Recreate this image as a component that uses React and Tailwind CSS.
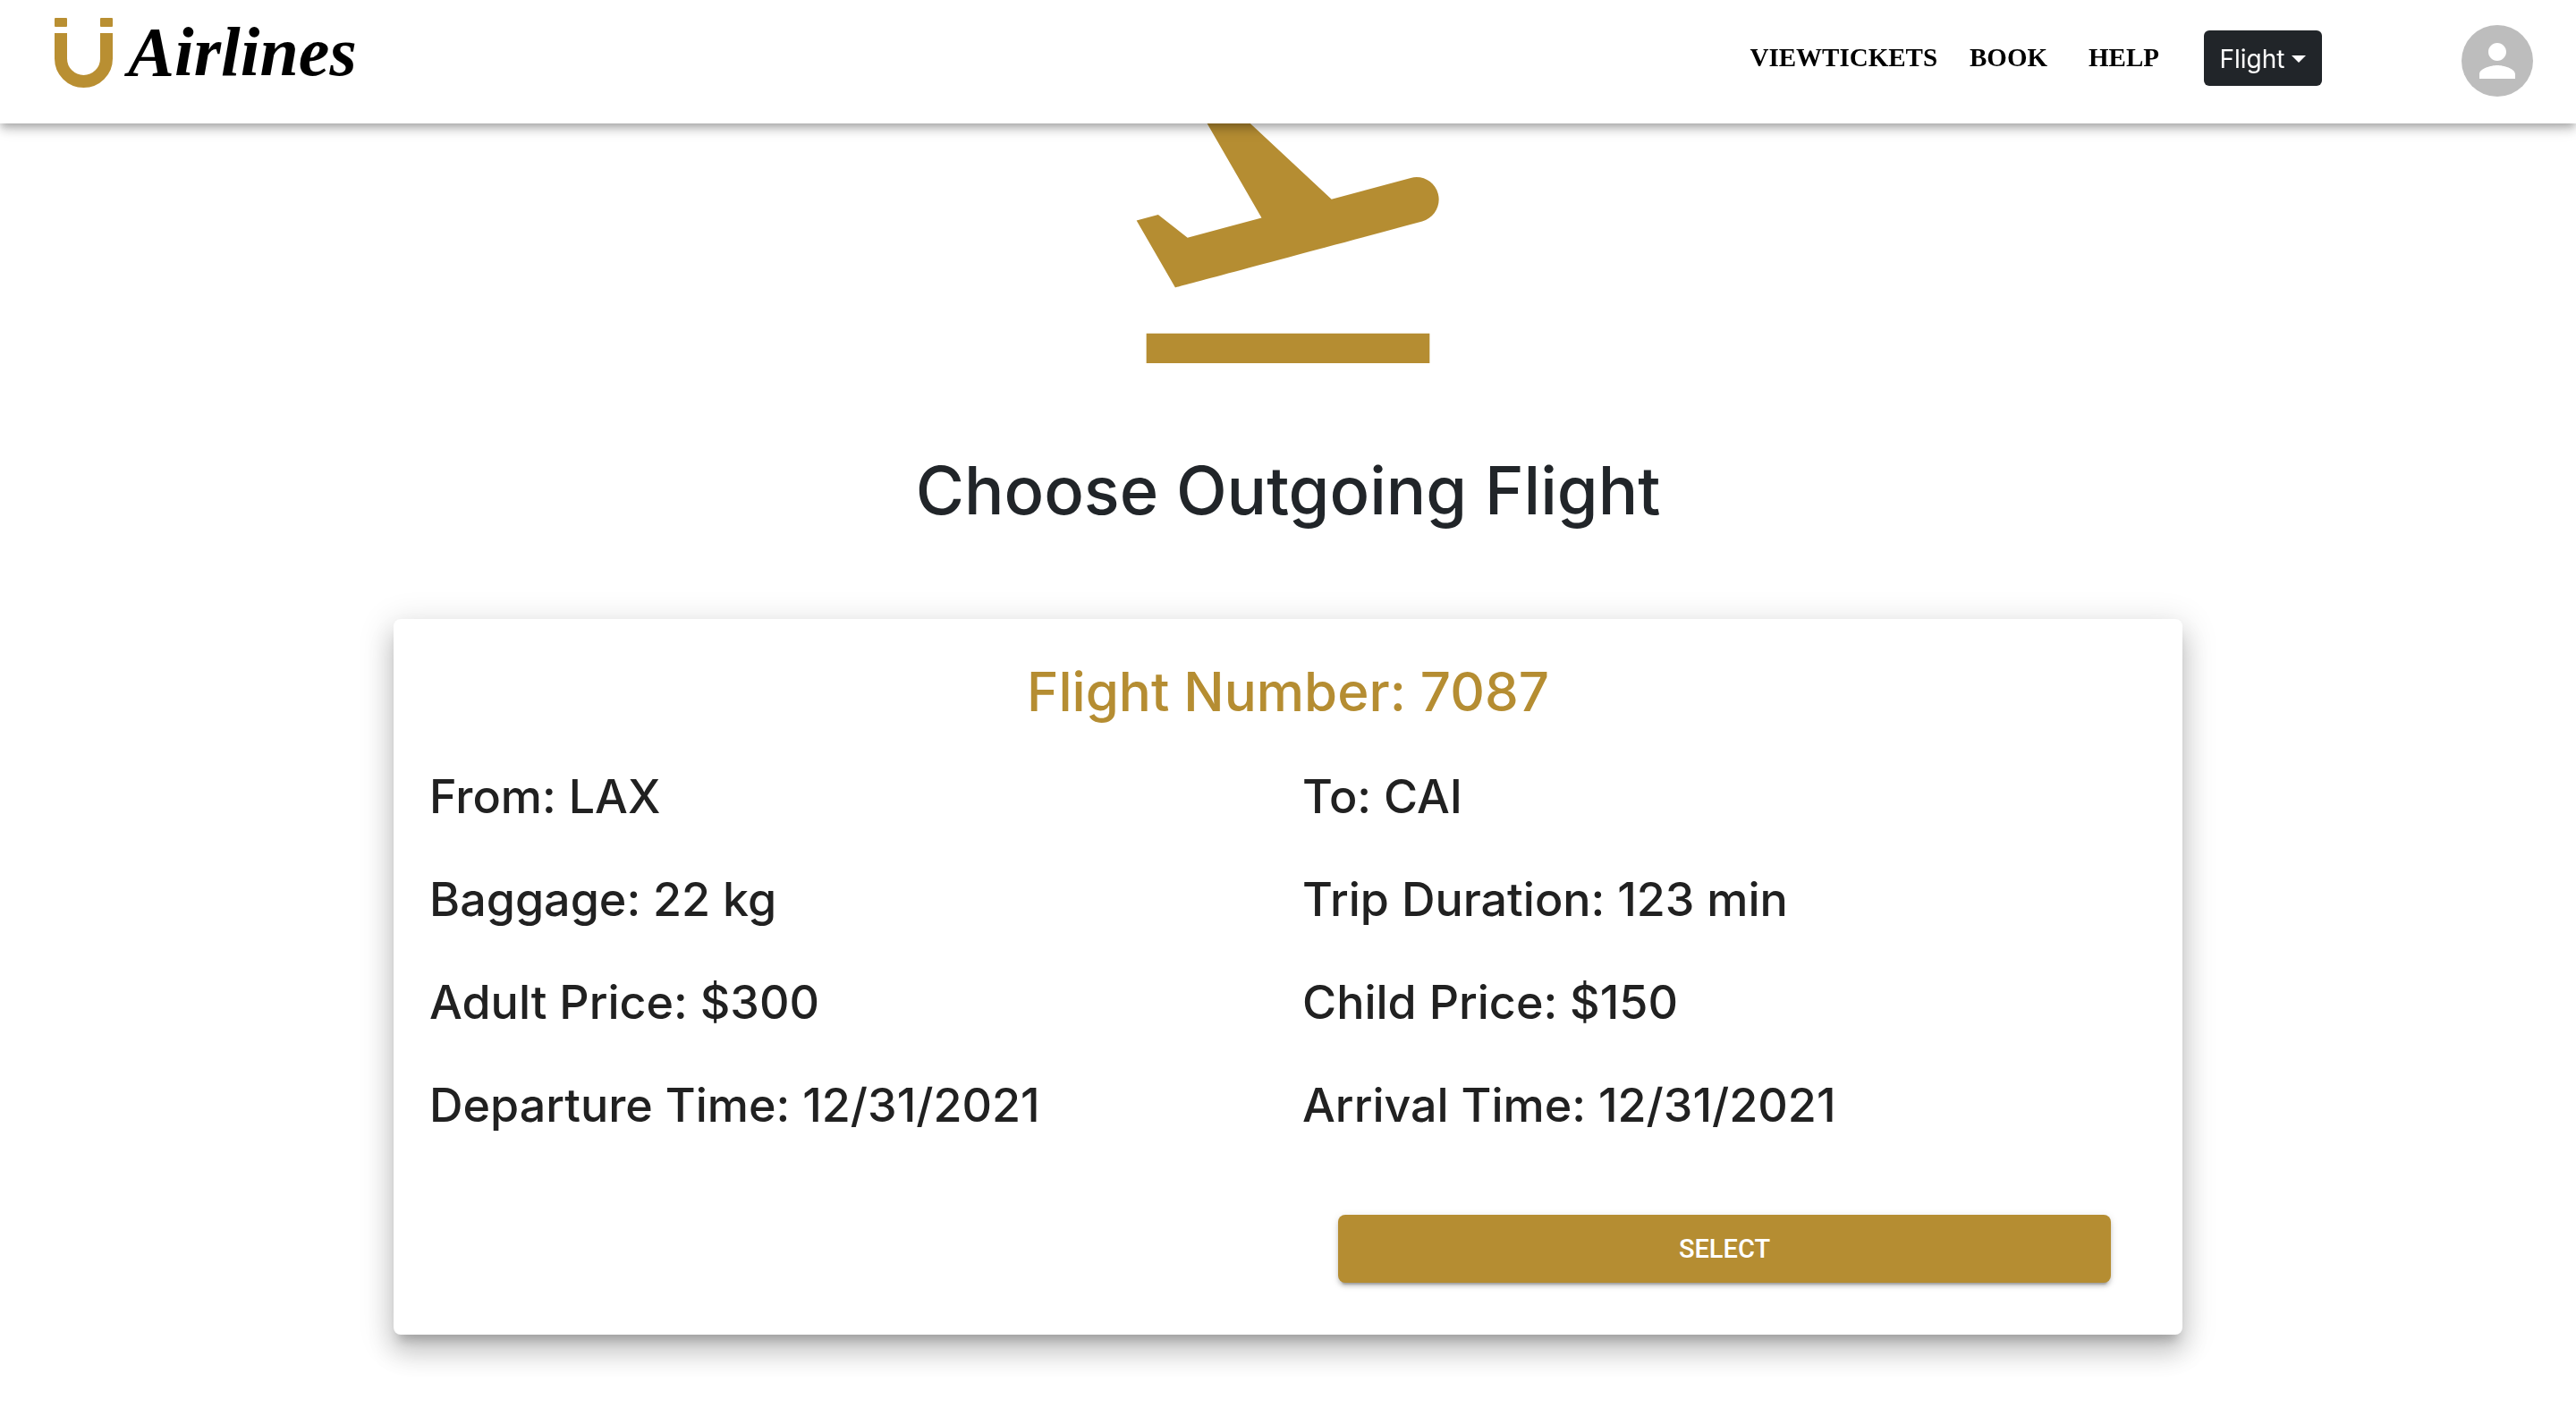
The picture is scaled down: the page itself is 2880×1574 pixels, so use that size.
const flight = {
  number: '7087',
  details: [
    ['From', 'LAX'],
    ['To', 'CAI'],
    ['Baggage', '22 kg'],
    ['Trip Duration', '123 min'],
    ['Adult Price', '$300'],
    ['Child Price', '$150'],
    ['Departure Time', '12/31/2021'],
    ['Arrival Time', '12/31/2021'],
  ],
};

function Logo() {
  return (
    <a href="#home" aria-label="U Airlines" className="flex items-start gap-4 pl-15 pt-5 text-black">
      <svg viewBox="0 0 67 78" className="h-[78px] w-[67px]" aria-hidden="true">
        <g fill="#b98f32">
          <rect x="1" y="0" width="14" height="10" rx="1" />
          <rect x="52" y="0" width="14" height="10" rx="1" />
        </g>
        <path d="M8 17v28.500a25.500 25.500 0 0 0 51 0V17" fill="none" stroke="#b98f32" strokeWidth="14" />
      </svg>
      <span className="font-['Liberation_Serif',serif] text-[78px] leading-[76px] font-bold italic">Airlines</span>
    </a>
  );
}

function Header() {
  return (
    <header className="fixed inset-x-0 top-0 z-10 flex h-[138px] items-start justify-between bg-white pr-12 shadow-[0_4px_8px_-2px_rgba(0,0,0,0.2),0_8px_10px_0_rgba(0,0,0,0.14),0_2px_20px_0_rgba(0,0,0,0.12)]">
      <Logo />
      <div className="flex items-start">
        <nav className="flex pt-11 font-['Liberation_Serif',serif] text-[29px] leading-10 font-bold text-black">
          <a href="#tickets">VIEWTICKETS</a>
          <a href="#book" className="ml-9">BOOK</a>
          <a href="#help" className="ml-[46px]">HELP</a>
        </nav>
        <button
          type="button"
          aria-haspopup="menu"
          className="mt-[34px] ml-[50px] flex h-[62px] w-[132px] items-center justify-center gap-2 rounded-md bg-[#212529] pt-0.5 text-[28px] text-white"
        >
          Flight
          <span className="border-x-8 border-t-8 border-x-transparent border-t-white" />
        </button>
        <button
          type="button"
          aria-label="Account"
          className="mt-7 ml-39 flex size-20 items-center justify-center rounded-full bg-[#bdbdbd]"
        >
          <svg viewBox="0 0 24 24" className="size-[60px] fill-white" aria-hidden="true">
            <path d="M12 12c2.210 0 4-1.790 4-4s-1.790-4-4-4-4 1.790-4 4 1.790 4 4 4zm0 2c-2.670 0-8 1.340-8 4v2h16v-2c0-2.660-5.330-4-8-4z" />
          </svg>
        </button>
      </div>
    </header>
  );
}

function FlightCard() {
  return (
    <section className="mx-auto mt-24 w-full max-w-[2000px] rounded-lg bg-white px-10 pt-10 pb-[58px] text-[#212121] shadow-[0_12px_12px_-6px_rgba(0,0,0,0.2),0_20px_28px_2px_rgba(0,0,0,0.14),0_8px_36px_6px_rgba(0,0,0,0.12)]">
      <h2 className="text-center text-[60px] leading-[82px] font-medium text-[#b58d32]">
        Flight Number: {flight.number}
      </h2>
      <div className="mt-[43px] grid grid-cols-2 gap-x-8 gap-y-[47px] text-[52px] leading-[68px] font-medium">
        {flight.details.map(([label, value]) => (
          <p key={label}>
            {label}: {value}
          </p>
        ))}
      </div>
      <div className="mt-22 grid grid-cols-2 gap-x-8">
        <button
          type="button"
          className="col-start-2 mx-10 h-[76px] rounded-lg bg-[#b58d32] pt-0.5 font-[Roboto,sans-serif] text-[29px] font-medium text-white shadow-[0_6px_2px_-4px_rgba(0,0,0,0.2),0_4px_4px_0_rgba(0,0,0,0.14),0_2px_10px_0_rgba(0,0,0,0.12)]"
        >
          SELECT
        </button>
      </div>
    </section>
  );
}

export default function App() {
  return (
    <div className="min-h-screen bg-white font-[Inter,sans-serif] text-[#212529]">
      <Header />
      <main className="flex flex-col items-center px-10 pt-14 pb-20">
        <svg viewBox="0 0 24 24" className="size-[400px] fill-[#b58d32]" aria-hidden="true">
          <path d="M2.500 19h19v2h-19v-2zm19.570-9.360c-.21-.8-1.040-1.280-1.840-1.060L14.920 10l-6.900-6.430-1.930.51 4.140 7.170-4.970 1.330-1.970-1.540-1.450.39 2.590 4.490s7.120-1.900 16.570-4.430c.81-.23 1.280-1.050 1.070-1.850z" />
        </svg>
        <h1 className="mt-11 text-[74px] leading-24 font-medium">Choose Outgoing Flight</h1>
        <FlightCard />
      </main>
    </div>
  );
}
